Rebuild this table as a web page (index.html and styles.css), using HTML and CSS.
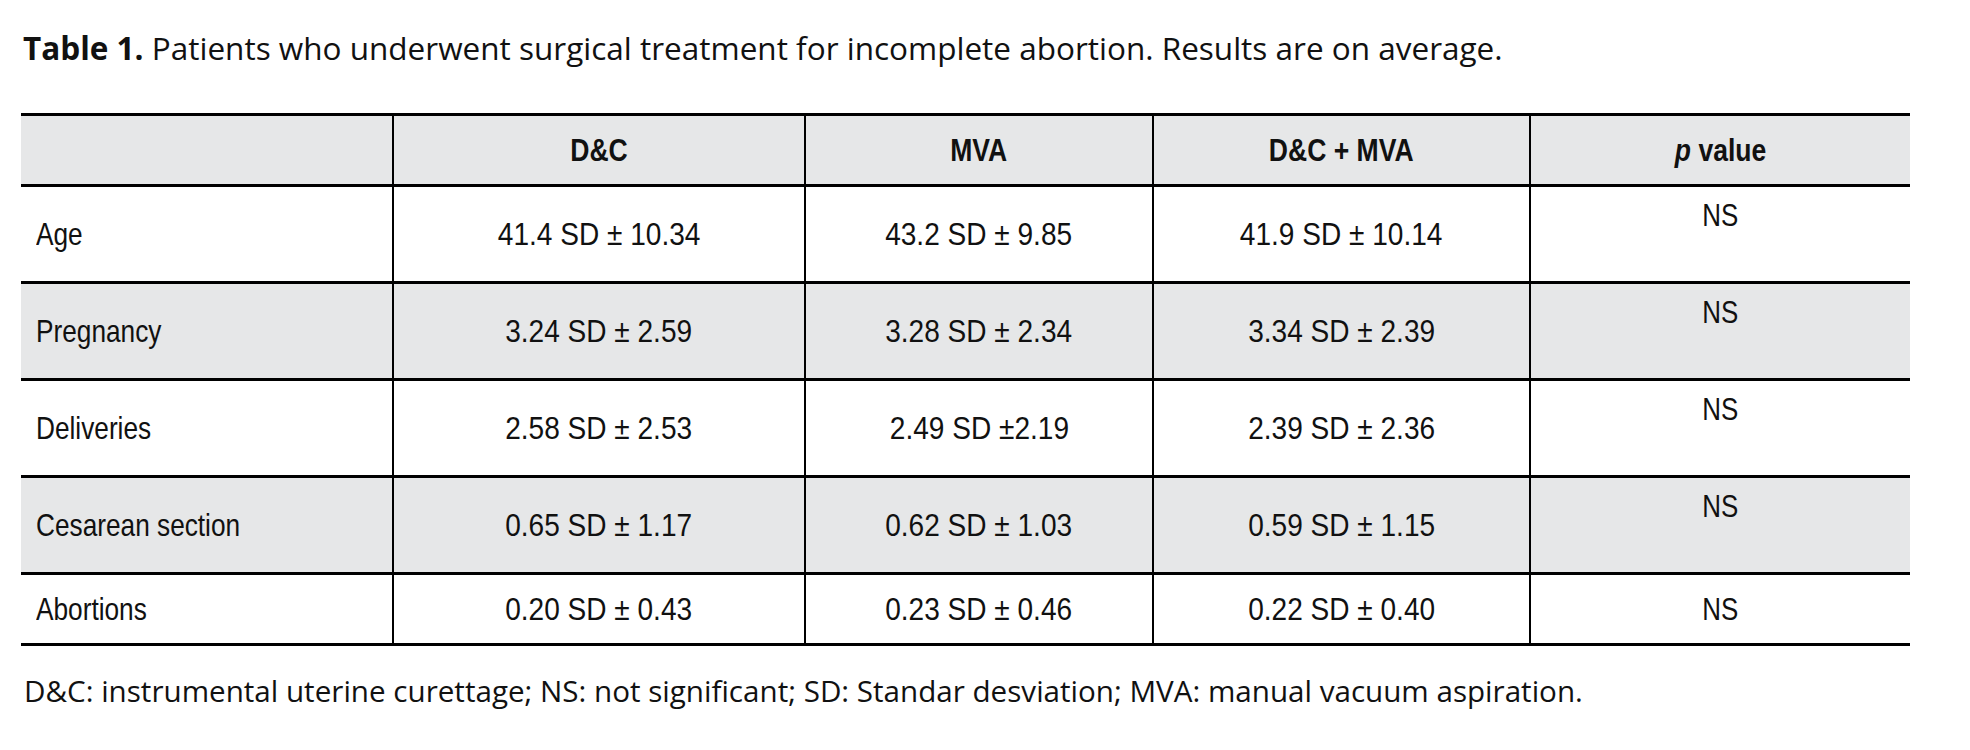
FILE: index.html
```html
<!DOCTYPE html>
<html lang="en">
<head>
<meta charset="utf-8">
<title>Table 1</title>
<link rel="stylesheet" href="styles.css">
</head>
<body>
<div class="page">
  <p class="caption"><b>Table 1.</b> Patients who underwent surgical treatment for incomplete abortion. Results are on average.</p>
  <table class="data">
    <colgroup>
      <col class="c1"><col class="c2"><col class="c3"><col class="c4"><col class="c5">
    </colgroup>
    <thead>
      <tr class="head">
        <th></th>
        <th><span class="t">D&amp;C</span></th>
        <th><span class="t">MVA</span></th>
        <th><span class="t">D&amp;C + MVA</span></th>
        <th><span class="t"><i>p</i> value</span></th>
      </tr>
    </thead>
    <tbody>
      <tr class="tall">
        <td class="label"><span class="t">Age</span></td>
        <td class="val"><span class="t">41.4 SD ± 10.34</span></td>
        <td class="val"><span class="t">43.2 SD ± 9.85</span></td>
        <td class="val"><span class="t">41.9 SD ± 10.14</span></td>
        <td class="p"><span class="t">NS</span></td>
      </tr>
      <tr class="tall shade">
        <td class="label"><span class="t">Pregnancy</span></td>
        <td class="val"><span class="t">3.24 SD ± 2.59</span></td>
        <td class="val"><span class="t">3.28 SD ± 2.34</span></td>
        <td class="val"><span class="t">3.34 SD ± 2.39</span></td>
        <td class="p"><span class="t">NS</span></td>
      </tr>
      <tr class="tall">
        <td class="label"><span class="t">Deliveries</span></td>
        <td class="val"><span class="t">2.58 SD ± 2.53</span></td>
        <td class="val"><span class="t">2.49 SD ±2.19</span></td>
        <td class="val"><span class="t">2.39 SD ± 2.36</span></td>
        <td class="p"><span class="t">NS</span></td>
      </tr>
      <tr class="tall shade">
        <td class="label"><span class="t">Cesarean section</span></td>
        <td class="val"><span class="t">0.65 SD ± 1.17</span></td>
        <td class="val"><span class="t">0.62 SD ± 1.03</span></td>
        <td class="val"><span class="t">0.59 SD ± 1.15</span></td>
        <td class="p"><span class="t">NS</span></td>
      </tr>
      <tr class="short">
        <td class="label"><span class="t">Abortions</span></td>
        <td class="val"><span class="t">0.20 SD ± 0.43</span></td>
        <td class="val"><span class="t">0.23 SD ± 0.46</span></td>
        <td class="val"><span class="t">0.22 SD ± 0.40</span></td>
        <td class="p last"><span class="t">NS</span></td>
      </tr>
    </tbody>
  </table>
  <p class="footnote">D&amp;C: instrumental uterine curettage; NS: not significant; SD: Standar desviation; MVA: manual vacuum aspiration.</p>
</div>
</body>
</html>
```
FILE: styles.css
```css
html, body {
  margin: 0;
  padding: 0;
  background: #ffffff;
}

.page {
  padding: 0 0 0 21px;
  color: #111111;
}

.caption {
  margin: 0;
  padding: 28px 0 0 2px;
  height: 57px;
  box-sizing: border-box;
  font-family: "Open Sans", "DejaVu Sans Condensed", sans-serif;
  font-size: 31.5px;
  line-height: 40px;
  white-space: nowrap;
}

.caption b {
  font-weight: 700;
}

.data {
  margin-top: 56px;
  width: 1889px;
  border-collapse: collapse;
  table-layout: fixed;
  font-family: "Liberation Sans", Arial, sans-serif;
  font-size: 30.5px;
  line-height: 36px;
  color: #111111;
}

.c1 { width: 372px; }
.c2 { width: 412px; }
.c3 { width: 348px; }
.c4 { width: 377px; }
.c5 { width: 380px; }

.data th,
.data td {
  border-top: 3px solid #000;
  border-bottom: 3px solid #000;
  border-left: 2px solid #000;
  padding: 0;
  text-align: center;
  vertical-align: middle;
  white-space: nowrap;
}

.data th:first-child,
.data td:first-child {
  border-left: none;
}

.t {
  display: inline-block;
  transform-origin: center center;
}

.head {
  height: 71px;
}

.head th {
  background: #e6e7e8;
  font-weight: 700;
}

.head th .t {
  transform: scaleX(0.87);
}

.head th i {
  font-style: italic;
  font-weight: 700;
}

.tall {
  height: 97px;
}

.short {
  height: 71px;
}

.shade td {
  background: #e6e7e8;
}

.data td.val {
  padding-top: 0;
}

.data td.val .t {
  transform: scaleX(0.92);
}

.data td.label {
  text-align: left;
  padding-left: 15px;
  padding-top: 0;
}

.data td.label .t {
  transform-origin: left center;
  transform: scaleX(0.86);
}

.data td.p {
  vertical-align: top;
  padding-top: 10px;
}

.data td.p .t {
  transform: scaleX(0.85);
}

.data td.p.last {
  vertical-align: middle;
  padding-top: 0;
}

.footnote {
  margin: 0;
  padding: 25px 0 0 3px;
  font-family: "Open Sans", "DejaVu Sans Condensed", sans-serif;
  font-size: 29.6px;
  line-height: 40px;
  white-space: nowrap;
}
```
